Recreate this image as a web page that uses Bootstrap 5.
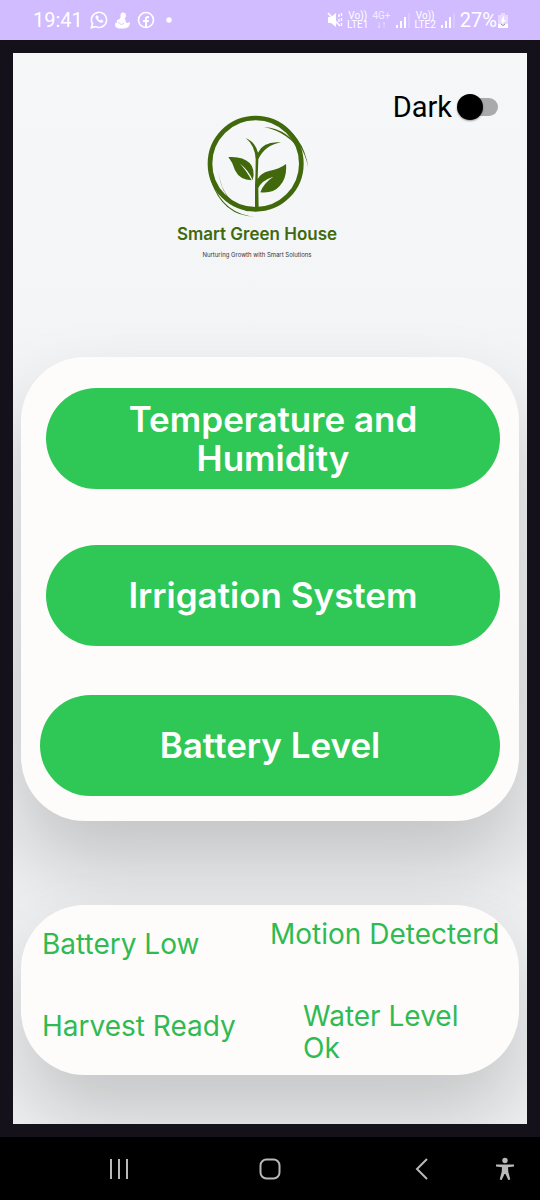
<!DOCTYPE html>
<html lang="en">
<head>
<meta charset="utf-8">
<meta name="viewport" content="width=device-width, initial-scale=1">
<title>Smart Green House</title>
<link href="https://cdn.jsdelivr.net/npm/bootstrap@5.3.0/dist/css/bootstrap.min.css" rel="stylesheet">
<style>
  body { background: #15111a; font-family: Inter, "Open Sans", sans-serif; }
  .status-bar { height: 40px; padding: 0 31px 0 33px; background: #d1bcff; color: #fff; font: 20px/24px Roboto, sans-serif; }
  .status-bar svg { display: block; }
  .status-left { gap: 7px; }
  .status-right { gap: 4px; }
  .net-label { font-size: 10px; line-height: 9px; text-align: center; }
  .screen { margin: 13px; padding: 41px 8px 49px; overflow: hidden; background: linear-gradient(#f6f7f9, #f3f5f7 24%, #ebedef 60%, #eff1f2); }
  .screen-head { display: grid; grid-template-columns: 1fr auto 1fr; padding: 0 21px 0 0; margin-left: -5px; min-height: 263px; }
  .brand-block { grid-column: 2; padding-top: 16px; color: #41690c; }
  .brand-title { font: 600 17px/24px Inter, sans-serif; margin-top: 2px; }
  .brand-tag { font: 6px/10px Inter, sans-serif; color: #333; margin-top: 4px; }
  .theme-label { font: 29px/26px Roboto, sans-serif; color: #000; }
  .theme-toggle { appearance: none; position: relative; width: 36px; height: 18px; margin: 0 0 0 10px; border-radius: 9px; background: #a9aaab; }
  .theme-toggle::before { content: ""; position: absolute; left: -5px; top: -4px; width: 26px; height: 26px; border-radius: 50%; background: #000; box-shadow: 0 1px 2px #0006; }
  .theme-toggle:checked::before { left: 15px; }
  .panel { background: #fefcfa; border-radius: 64px; box-shadow: 0 42px 80px rgba(0, 0, 0, .18); }
  .menu-panel { padding: 31px 19px 25px; }
  .btn-menu { min-height: 101px; padding: 8px 64px; border: 0; border-radius: 51px; background: #2fc755; color: #fff; font-size: 35px; line-height: 39px; font-weight: 600; }
  .btn-menu:hover { background: #28b04b; color: #fff; }
  .btn-inset { margin-left: 6px; }
  .menu-panel .btn-menu:nth-child(2) { margin-top: 56px; }
  .menu-panel .btn-menu:nth-child(3) { margin-top: 49px; }
  .alert-panel { position: relative; margin-top: 84px; padding: 13px 0 11px 21px; overflow: hidden; color: #2fbb52; font-size: 28px; line-height: 32px; }
  .alert-left { flex: 0 0 228px; padding-top: 10px; }
  .alert-col { display: flex; flex-direction: column; gap: 50px; white-space: nowrap; }
  .alert-water { margin-left: 33px; width: 170px; white-space: normal; }
  .nav-keys { display: grid; grid-template-columns: 194fr 152fr 118fr 76fr; height: 63px; background: #000; }
  .nav-keys .btn { border: 0; padding: 0; color: #b9b9b9; }
  .nav-keys svg { display: block; margin: 0 auto; }
  .nav-keys .key-recent { padding-left: 44px; }
  .nav-keys .key-back { padding-left: 34px; }
  .nav-keys .key-access { padding-left: 6px; }
</style>
</head>
<body>
<div class="d-flex flex-column min-vh-100">
  <header class="status-bar d-flex align-items-center justify-content-between">
    <div class="status-left d-flex align-items-center">
      <span>19:41</span>
      <svg width="18" height="18" viewBox="0 0 19 19" fill="none" stroke="#fff" stroke-width="1.700"><path d="M1.500 17.500 2.700 13.500A8 8 0 1 1 6 16.500Z"/><path d="M6.500 5c-2 2 3.500 9 7 6.500l.2-1.300-2-1-1 1c-1-.3-2-1.500-2.400-2.500l.8-.8L8 5Z" fill="#fff" stroke-width=".5"/></svg>
      <svg width="15" height="17" viewBox="0 0 15 17" fill="#fff"><path d="M8 .5q3 0 3 3 0 2-1.500 3 2 1.500 1 3.500l1.500 1 3-1q0 6-6 6.500H4Q0 16 0 12.500q0-2 2-2-1-3 2-3l1.500-2Q5 .5 8 .5Z"/><path d="m3 10 3 2.500 3-1" fill="none" stroke="#d1bcff" stroke-width=".8"/></svg>
      <svg width="18" height="18" viewBox="0 0 18 18"><circle cx="9" cy="9" r="7.500" fill="none" stroke="#fff" stroke-width="1.600"/><path d="M8 16v-5H6V9h2V7.500Q8 4.500 12 5v2q-2-.4-2 1v1h2l-.4 2H10v5Z" fill="#fff"/></svg>
      <svg width="12" height="6" viewBox="0 0 12 6" fill="#fff"><circle cx="7" cy="3" r="2.700"/></svg>
    </div>
    <div class="status-right d-flex align-items-center">
      <svg width="16" height="16" viewBox="0 0 16 16" fill="#fff"><path d="M1 5h3l5-4v14l-5-4H1Z"/><path d="m1 1 12 13" stroke="#fff" stroke-width="1.500"/><path d="M12 2v3M14.500 1v3M12 7v3M14.500 6v3M14.500 11v3" fill="none" stroke="#fff" stroke-width="1.300"/></svg>
      <div class="net-label">Vo))<br>LTE1</div>
      <div class="net-label opacity-75">4G+<br>↓↑</div>
      <svg width="16" height="15" viewBox="0 0 16 15" fill="#fff"><path d="M1 12h2v3H1ZM5 8h2v7H5ZM9 4h2v11H9Z"/><path d="M13 0h2v15h-2Z" opacity=".2"/></svg>
      <div class="net-label">Vo))<br>LTE2</div>
      <svg width="16" height="15" viewBox="0 0 16 15" fill="#fff"><path d="M1 12h2v3H1ZM5 8h2v7H5ZM9 4h2v11H9Z"/><path d="M13 0h2v15h-2Z" opacity=".2"/></svg>
      <div class="d-flex align-items-center">
        <span>27%</span>
        <svg width="12" height="17" viewBox="0 0 12 17"><path d="M4 1h4v2h3v13H1V3h3Z" fill="#fff" opacity=".45"/><path d="M1 12h10v4H1Z" fill="#fff"/><path d="M7 3.500 3.500 9.500h2L4.500 13 9 8H7Z" fill="#fff"/><path d="m4 12 2 1.500 2-1.500" fill="none" stroke="#8f7fb3"/></svg>
      </div>
    </div>
  </header>

  <main class="screen flex-grow-1">
    <div class="screen-head">
      <div class="brand-block d-flex flex-column align-items-center">
        <svg width="112" height="110" viewBox="1 0 336 330" fill="#41690c" role="img" aria-label="Plant logo">
          <circle cx="165" cy="161" r="137" fill="none" stroke="#41690c" stroke-width="14"/>
          <path d="M222 32Q309 73 323 173 307 94 240 48Z"/>
          <path d="M190 51Q267 57 302 128 264 67 190 51Z"/>
          <path d="M54 186Q64 280 152 303L140 304Q62 274 54 186Z"/>
          <path d="M36 218Q70 312 164 320 66 320 30 210Z"/>
          <path d="M163 300V228Q165 190 165 148 163 106 135 84 164 96 172 128 188 92 241 97 192 106 173 148L171 207Q179 190 205 183 237 177 256 162 260 203 237 228 218 251 179 247 188 220 218 200 182 212 173 234L174 300Z"/>
          <path d="M83 141Q126 138 147 159 165 178 156 211 145 181 118 161 136 180 153 211 117 210 103 181 98 160 83 141Z"/>
        </svg>
        <div class="brand-title">Smart Green House</div>
        <div class="brand-tag">Nurturing Growth with Smart Solutions</div>
      </div>
      <div class="d-flex justify-content-end align-items-start">
        <div class="d-flex align-items-center">
          <label class="theme-label" for="dark">Dark</label>
          <input class="theme-toggle" type="checkbox" role="switch" id="dark">
        </div>
      </div>
    </div>

    <nav class="panel menu-panel d-flex flex-column">
      <button type="button" class="btn btn-menu btn-inset">Temperature and Humidity</button>
      <button type="button" class="btn btn-menu btn-inset">Irrigation System</button>
      <button type="button" class="btn btn-menu">Battery Level</button>
    </nav>

    <section class="panel alert-panel d-flex">
      <div class="alert-col alert-left">
        <div>Battery Low</div>
        <div>Harvest Ready</div>
      </div>
      <div class="alert-col">
        <div>Motion Detecterd</div>
        <div class="alert-water">Water Level Ok</div>
      </div>
    </section>
  </main>

  <footer class="nav-keys">
    <button type="button" class="btn key-recent" aria-label="Recent apps"><svg width="22" height="22" viewBox="0 0 22 22" stroke="currentColor" stroke-width="2"><path d="M3 1v20M11 1v20M19 1v20"/></svg></button>
    <button type="button" class="btn" aria-label="Home"><svg width="22" height="22" viewBox="0 0 22 22" fill="none" stroke="currentColor" stroke-width="2"><rect x="1.500" y="1.500" width="19" height="19" rx="6"/></svg></button>
    <button type="button" class="btn key-back" aria-label="Back"><svg width="22" height="22" viewBox="0 0 22 22" fill="none" stroke="currentColor" stroke-width="2"><path d="M16 1 6 11l10 10"/></svg></button>
    <button type="button" class="btn key-access" aria-label="Accessibility"><svg width="20" height="24" viewBox="0 0 20 24" fill="currentColor"><circle cx="10" cy="3.500" r="2.700"/><path d="M1 7.500h18v2l-6 .8.300 4.500 2 7.700-2 .5L10.500 17h-1l-2.800 6-2-.5 2-7.700.3-4.500-6-.8Z"/></svg></button>
  </footer>
</div>
<script src="https://cdn.jsdelivr.net/npm/bootstrap@5.3.0/dist/js/bootstrap.bundle.min.js"></script>
</body>
</html>
